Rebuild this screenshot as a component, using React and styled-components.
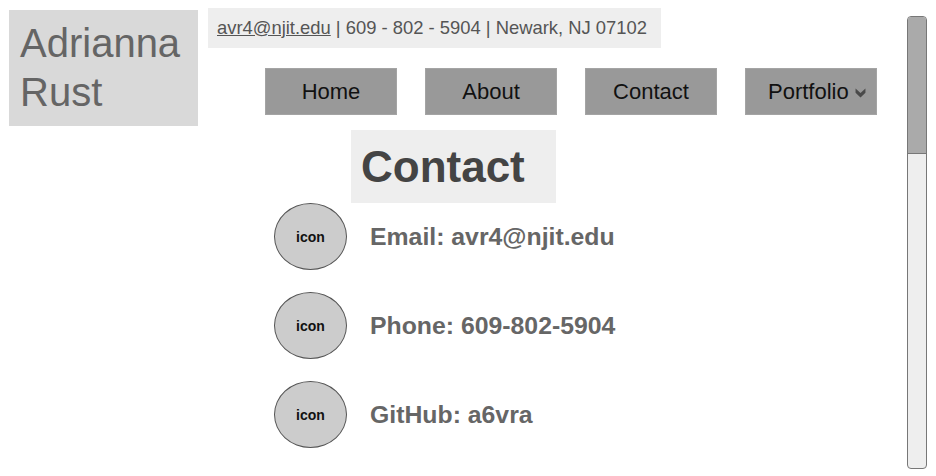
import React from 'react';
import styled, { createGlobalStyle } from 'styled-components';

const navItems = [
  { label: 'Home' },
  { label: 'About' },
  { label: 'Contact' },
  { label: 'Portfolio', menu: true },
];

const contacts = [
  { label: 'Email: avr4@njit.edu' },
  { label: 'Phone: 609-802-5904' },
  { label: 'GitHub: a6vra' },
];

const ChevronIcon = () => (
  <ChevronSvg viewBox="0 0 10 10" aria-hidden="true">
    <path d="M0.5 1 L5 5 L9.5 1 L9.5 4.8 L5 9.2 L0.5 4.8 Z" fill="#4a4a4a" />
  </ChevronSvg>
);

const App = () => {
  return (
    <>
      <GlobalStyle />
      <Page>
        <NameBox>Adrianna<br />Rust</NameBox>
        <Main>
          <InfoBar>
            <MailLink href="#">avr4@njit.edu</MailLink> | 609 - 802 - 5904 | Newark, NJ 07102
          </InfoBar>
          <Nav>
            {navItems.map((item) => (
              <NavButton key={item.label} $menu={item.menu}>
                {item.label}
                {item.menu && <ChevronIcon />}
              </NavButton>
            ))}
          </Nav>
          <Heading>Contact</Heading>
          <ContactList>
            {contacts.map((c) => (
              <ContactRow key={c.label}>
                <IconCircle>icon</IconCircle>
                <ContactText>{c.label}</ContactText>
              </ContactRow>
            ))}
          </ContactList>
        </Main>
        <ScrollTrack>
          <ScrollThumb />
        </ScrollTrack>
      </Page>
    </>
  );
};

export default App;

// Styled components

const GlobalStyle = createGlobalStyle`
  html, body {
    margin: 0;
    padding: 0;
    background: #ffffff;
    font-family: "Liberation Sans", Arial, sans-serif;
  }
`;

const Page = styled.div`
  display: flex;
  align-items: flex-start;
  width: 936px;
  height: 476px;
  overflow: hidden;
`;

const NameBox = styled.div`
  margin: 10px 0 0 9px;
  width: 189px;
  height: 116px;
  box-sizing: border-box;
  padding: 9px 0 0 11px;
  background: #d9d9d9;
  color: #656565;
  font-size: 40px;
  line-height: 49px;
`;

const Main = styled.div`
  display: flex;
  flex-direction: column;
  align-items: flex-start;
  margin: 8px 0 0 10px;
`;

const InfoBar = styled.div`
  width: 453px;
  height: 40px;
  box-sizing: border-box;
  padding-left: 9px;
  display: flex;
  align-items: center;
  white-space: pre;
  background: #eeeeee;
  color: #555555;
  font-size: 18.4px;
`;

const MailLink = styled.a`
  color: #555555;
  text-decoration: underline;
`;

const Nav = styled.nav`
  display: flex;
  gap: 28px;
  margin: 20px 0 0 57px;
`;

const NavButton = styled.div`
  width: 132px;
  height: 47px;
  box-sizing: border-box;
  display: flex;
  align-items: center;
  justify-content: ${(p) => (p.$menu ? 'flex-start' : 'center')};
  gap: 6px;
  padding-left: ${(p) => (p.$menu ? '22px' : '0')};
  background: #999999;
  border: 1px solid #a4a4a4;
  color: #111111;
  font-size: 22px;
`;

const ChevronSvg = styled.svg`
  width: 11px;
  height: 12px;
  margin-top: 2px;
`;

const Heading = styled.h1`
  margin: 15px 0 0 143px;
  width: 205px;
  height: 73px;
  box-sizing: border-box;
  padding-left: 10px;
  display: flex;
  align-items: center;
  background: #eeeeee;
  color: #444444;
  font-size: 44px;
  font-weight: bold;
`;

const ContactList = styled.div`
  display: flex;
  flex-direction: column;
  gap: 22px;
  margin-left: 66px;
`;

const ContactRow = styled.div`
  display: flex;
  align-items: center;
  gap: 23px;
`;

const IconCircle = styled.div`
  width: 73px;
  height: 67px;
  box-sizing: border-box;
  border-radius: 50%;
  border: 1px solid #555555;
  background: #cccccc;
  display: flex;
  align-items: center;
  justify-content: center;
  color: #111111;
  font-size: 14px;
  font-weight: bold;
`;

const ContactText = styled.div`
  color: #666666;
  font-size: 24.8px;
  font-weight: bold;
`;

const ScrollTrack = styled.div`
  margin: 16px 9px 0 auto;
  width: 20px;
  height: 453px;
  box-sizing: border-box;
  border: 1px solid #777777;
  border-radius: 4px;
  background: #eeeeee;
  overflow: hidden;
`;

const ScrollThumb = styled.div`
  height: 136px;
  background: #aaaaaa;
  border-bottom: 1px solid #777777;
`;
